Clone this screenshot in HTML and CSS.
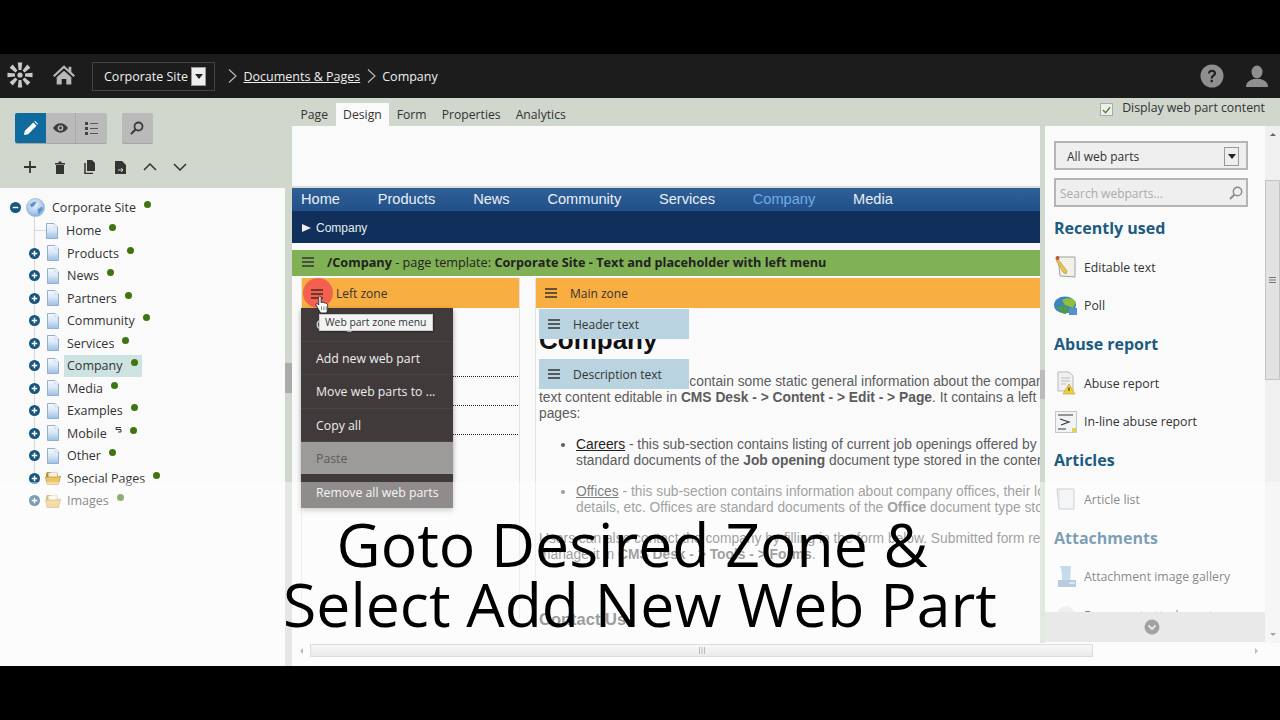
FILE: index.html
```html
<!DOCTYPE html>
<html lang="en">

<head>
    <meta charset="UTF-8">
    <title>Company - Documents &amp; Pages</title>
    <link rel="stylesheet" href="styles.css">
</head>

<body>
    <svg class="defs" width="0" height="0">
        <linearGradient id="docfill" x1="0" y1="0" x2="0" y2="1">
            <stop offset="0" stop-color="#f6f9fd"/>
            <stop offset=".45" stop-color="#dbe8f6"/>
            <stop offset="1" stop-color="#9cc0e6"/>
        </linearGradient>
        <radialGradient id="globefill" cx=".45" cy=".35" r=".75">
            <stop offset="0" stop-color="#eef5fc"/>
            <stop offset=".6" stop-color="#a9c9ec"/>
            <stop offset="1" stop-color="#6d9ed6"/>
        </radialGradient>
        <symbol id="doc" viewBox="0 0 12 16">
            <path d="M.5.5h7.500l3.500 3.500v11.500H.5z" fill="url(#docfill)" stroke="#8fb0cf"/>
            <path d="M8 .5V4h3.500" fill="#fff" stroke="#a9c3dc" stroke-width=".6"/>
        </symbol>
        <symbol id="plus" viewBox="0 0 12 12">
            <circle cx="6" cy="6" r="6" fill="#17577f"/>
            <path d="M3 6h6M6 3v6" stroke="#fff" stroke-width="1.600"/>
        </symbol>
        <symbol id="folder" viewBox="0 0 16 14">
            <path d="M1 3l1-2h4l1 2h6v3H1z" fill="#b08f3e"/>
            <path d="M3 2l9-1 1 7H4z" fill="#f6f1dc" stroke="#c2b27a" stroke-width=".5"/>
            <path d="M.5 6h12l3-1-2 8.500H2z" fill="#ecc565" stroke="#ab8a3a" stroke-width=".6"/>
        </symbol>
        <symbol id="bars" viewBox="0 0 12 10">
            <path d="M0 1h12M0 5h12M0 9h12" stroke="currentColor" stroke-width="1.700"/>
        </symbol>
        <symbol id="chev" viewBox="0 0 9 14">
            <path d="M1 .5L8 7l-7 6.500" fill="none" stroke="#bdbdbd" stroke-width="1.100"/>
        </symbol>
    </svg>

    <div class="screen">
        <header class="topbar">
            <svg class="logo" viewBox="0 0 26 26" width="26" height="26">
                <g fill="#c9c9c9">
                    <circle cx="13" cy="13" r="2.600"/>
                    <path d="M10.800.500h4.400l-.8 7.500h-2.800z"/>
                    <path d="M10.800.500h4.400l-.8 7.500h-2.800z" transform="rotate(45 13 13)"/>
                    <path d="M10.800.500h4.400l-.8 7.500h-2.800z" transform="rotate(90 13 13)"/>
                    <path d="M10.800.500h4.400l-.8 7.500h-2.800z" transform="rotate(135 13 13)"/>
                    <path d="M10.800.500h4.400l-.8 7.500h-2.800z" transform="rotate(180 13 13)"/>
                    <path d="M10.800.500h4.400l-.8 7.500h-2.800z" transform="rotate(225 13 13)"/>
                    <path d="M10.800.500h4.400l-.8 7.500h-2.800z" transform="rotate(270 13 13)"/>
                    <path d="M10.800.500h4.400l-.8 7.500h-2.800z" transform="rotate(315 13 13)"/>
                </g>
            </svg>
            <svg class="home" viewBox="0 0 24 22" width="22" height="21">
                <path d="M12 1L0 12l1.600 1.700L12 4.300l10.400 9.400L24 12l-4-3.600V2.500h-3v3.200z" fill="#b8b8b8"/>
                <path d="M4 14l8-7 8 7v8h-5.500v-6h-5v6H4z" fill="#b8b8b8"/>
            </svg>
            <div class="site-select">
                <span>Corporate Site</span>
                <span class="mini-arrow"></span>
            </div>
            <nav class="crumbs">
                <svg class="chev"><use href="#chev"/></svg>
                <a href="#">Documents &amp; Pages</a>
                <svg class="chev"><use href="#chev"/></svg>
                <span>Company</span>
            </nav>
            <div class="topbar-right">
                <svg viewBox="0 0 24 24" width="24" height="24">
                    <circle cx="12" cy="12" r="11.500" fill="#8f8f8f"/>
                    <path d="M8 9.500C8 7 9.800 5.800 12 5.800s4 1.300 4 3.400c0 3-3.300 2.800-3.300 5.300h-2c0-3.400 3.100-3.300 3.100-5.200 0-1-.7-1.600-1.800-1.600S10 8.400 10 9.500z" fill="#1c1c1c"/>
                    <rect x="10.600" y="15.800" width="2.200" height="2.400" fill="#1c1c1c"/>
                </svg>
                <svg viewBox="0 0 24 24" width="24" height="24">
                    <ellipse cx="12" cy="8" rx="5.500" ry="6.500" fill="#8f8f8f"/>
                    <path d="M1 23c0-5 4-7 7.500-8h7c3.500 1 7.500 3 7.500 8z" fill="#8f8f8f"/>
                </svg>
            </div>
        </header>

        <div class="workspace">
            <aside class="sidebar">
                <div class="side-tools">
                    <div class="modes">
                        <div class="mode-group">
                            <button class="mode active">
                                <svg viewBox="0 0 16 16" width="15" height="15"><path d="M1 15l1-4.500L11 1.500 14.500 5l-9 9zM12 .5l1-.5 3 3-.5 1z" fill="#fff"/></svg>
                            </button>
                            <button class="mode">
                                <svg viewBox="0 0 16 10" width="15" height="10"><path d="M0 5c2-3 5-5 8-5s6 2 8 5c-2 3-5 5-8 5S2 8 0 5z" fill="#3c3c3c"/><circle cx="8" cy="5" r="3" fill="#b9b9b9"/><circle cx="8" cy="5" r="1.500" fill="#3c3c3c"/></svg>
                            </button>
                            <button class="mode">
                                <svg viewBox="0 0 13 13" width="13" height="13"><path d="M0 0h3v3H0zM0 5h3v3H0zM0 10h3v3H0z" fill="#444"/><path d="M5 1.500h8M5 6.500h8M5 11.500h8" stroke="#555"/></svg>
                            </button>
                        </div>
                        <button class="mode single">
                            <svg viewBox="0 0 14 14" width="14" height="14"><circle cx="8.500" cy="5.500" r="4" fill="none" stroke="#3c3c3c" stroke-width="1.800"/><path d="M5.500 8.500L1 13" stroke="#3c3c3c" stroke-width="2.200"/></svg>
                        </button>
                    </div>
                    <div class="actions">
                        <span><svg viewBox="0 0 12 12" width="12" height="12"><path d="M6 0v12M0 6h12" stroke="#333" stroke-width="1.800"/></svg></span>
                        <span><svg viewBox="0 0 10 13" width="10" height="13"><path d="M0 2h10v1.500H0zM3.500.500h3V2h-3zM1 4h8v9H1z" fill="#333"/></svg></span>
                        <span><svg viewBox="0 0 12 14" width="12" height="14"><path d="M3 0h5l3 3v8H3z" fill="#333"/><path d="M1 3v10.500h8" fill="none" stroke="#333" stroke-width="1.500"/></svg></span>
                        <span><svg viewBox="0 0 11 13" width="11" height="13"><path d="M0 0h7l4 4v9H0z" fill="#333"/><path d="M3 9h5M6 7l2 2-2 2" fill="none" stroke="#d0d7cd"/></svg></span>
                        <span><svg viewBox="0 0 14 8" width="14" height="8"><path d="M1 7l6-6 6 6" fill="none" stroke="#333" stroke-width="1.500"/></svg></span>
                        <span><svg viewBox="0 0 14 8" width="14" height="8"><path d="M1 1l6 6 6-6" fill="none" stroke="#333" stroke-width="1.500"/></svg></span>
                    </div>
                </div>
                <div class="side-main">
                    <div class="tree">
                        <div class="tree-root">
                            <svg class="expander" viewBox="0 0 12 12"><circle cx="6" cy="6" r="6" fill="#17577f"/><path d="M3 6h6" stroke="#fff" stroke-width="1.600"/></svg>
                            <svg class="globe" viewBox="0 0 20 20" width="19" height="19"><circle cx="10" cy="10" r="9.500" fill="url(#globefill)" stroke="#a9bccf"/><path d="M4 7c3-3 5-3 7-3l-2 4-3 2zM12 12l5-3 .5 3-4 5z" fill="#5f93cf"/></svg>
                            <span>Corporate Site</span><i class="dot"></i>
                        </div>
                        <div class="tree-row leaf"><svg class="page"><use href="#doc"/></svg><span>Home</span><i class="dot"></i></div>
                        <div class="tree-row"><svg class="expander"><use href="#plus"/></svg><svg class="page"><use href="#doc"/></svg><span>Products</span><i class="dot"></i></div>
                        <div class="tree-row"><svg class="expander"><use href="#plus"/></svg><svg class="page"><use href="#doc"/></svg><span>News</span><i class="dot"></i></div>
                        <div class="tree-row"><svg class="expander"><use href="#plus"/></svg><svg class="page"><use href="#doc"/></svg><span>Partners</span><i class="dot"></i></div>
                        <div class="tree-row"><svg class="expander"><use href="#plus"/></svg><svg class="page"><use href="#doc"/></svg><span>Community</span><i class="dot"></i></div>
                        <div class="tree-row"><svg class="expander"><use href="#plus"/></svg><svg class="page"><use href="#doc"/></svg><span>Services</span><i class="dot"></i></div>
                        <div class="tree-row"><svg class="expander"><use href="#plus"/></svg><svg class="page"><use href="#doc"/></svg><div class="selected"><span>Company</span><i class="dot"></i></div></div>
                        <div class="tree-row"><svg class="expander"><use href="#plus"/></svg><svg class="page"><use href="#doc"/></svg><span>Media</span><i class="dot"></i></div>
                        <div class="tree-row"><svg class="expander"><use href="#plus"/></svg><svg class="page"><use href="#doc"/></svg><span>Examples</span><i class="dot"></i></div>
                        <div class="tree-row"><svg class="expander"><use href="#plus"/></svg><svg class="page"><use href="#doc"/></svg><span>Mobile</span><svg class="link-mark" viewBox="0 0 7 6" width="7" height="6"><path d="M6 .5H1v2h5v2.500H3" fill="none" stroke="#333"/></svg><i class="dot"></i></div>
                        <div class="tree-row"><svg class="expander"><use href="#plus"/></svg><svg class="page"><use href="#doc"/></svg><span>Other</span><i class="dot"></i></div>
                        <div class="tree-row"><svg class="expander"><use href="#plus"/></svg><svg class="page wide"><use href="#folder"/></svg><span>Special Pages</span><i class="dot"></i></div>
                        <div class="tree-row"><svg class="expander"><use href="#plus"/></svg><svg class="page wide"><use href="#folder"/></svg><span>Images</span><i class="dot"></i></div>
                    </div>
                    <div class="side-splitter"><span class="handle"></span></div>
                </div>
            </aside>

            <div class="content">
                <div class="tabs-row">
                    <div class="tabs">
                        <span class="tab">Page</span>
                        <span class="tab current">Design</span>
                        <span class="tab">Form</span>
                        <span class="tab">Properties</span>
                        <span class="tab">Analytics</span>
                    </div>
                    <label class="display-check">
                        <span class="checkbox">
                            <svg viewBox="0 0 10 8" width="9" height="8"><path d="M1 4l3 3 5-6" fill="none" stroke="#4c8a2a" stroke-width="1.500"/></svg>
                        </span>
                        Display web part content
                    </label>
                </div>

                <div class="content-body">
                    <div class="page-frame">
                        <div class="page-top"></div>
                        <nav class="site-nav">
                            <a href="#">Home</a>
                            <a href="#">Products</a>
                            <a href="#">News</a>
                            <a href="#">Community</a>
                            <a href="#">Services</a>
                            <a href="#" class="on">Company</a>
                            <a href="#">Media</a>
                        </nav>
                        <div class="site-subnav"><span class="tri"></span>Company</div>
                        <div class="template-bar">
                            <svg class="bars"><use href="#bars"/></svg>
                            <b>/Company</b>&nbsp;- page template:&nbsp;<b>Corporate Site - Text and placeholder with left menu</b>
                        </div>
                        <div class="zones">
                            <section class="left-zone">
                                <div class="zone-head">
                                    <span>Left zone</span>
                                </div>
                                <div class="zone-lines">
                                    <hr>
                                    <hr>
                                    <hr>
                                </div>
                            </section>
                            <section class="main-zone">
                                <div class="zone-head">
                                    <svg class="bars"><use href="#bars"/></svg>
                                    <span>Main zone</span>
                                </div>
                                <article class="copy">
                                    <h1>Company</h1>
                                    <p>This page and its pages contain some static general information about the company<br>
                                    text content editable in <b>CMS Desk - &gt; Content - &gt; Edit - &gt; Page</b>. It contains a left menu<br>
                                    pages:</p>
                                    <ul>
                                        <li><a href="#">Careers</a> - this sub-section contains listing of current job openings offered by the<br>
                                        standard documents of the <b>Job opening</b> document type stored in the content tree</li>
                                        <li><a href="#">Offices</a> - this sub-section contains information about company offices, their location<br>
                                        details, etc. Offices are standard documents of the <b>Office</b> document type stored</li>
                                    </ul>
                                    <p>Users can also contact the company by filling in the form below. Submitted form records<br>
                                    manage it in <b>CMS Desk - &gt; Tools - &gt; Forms</b>.</p>
                                    <h2>Contact Us</h2>
                                </article>
                                <div class="webpart wp-header"><svg class="bars"><use href="#bars"/></svg>Header text</div>
                                <div class="webpart wp-desc"><svg class="bars"><use href="#bars"/></svg>Description text</div>
                            </section>

                            <div class="zone-menu">
                                <div class="menu-item">Configure</div>
                                <div class="menu-item">Add new web part</div>
                                <div class="menu-item">Move web parts to ...</div>
                                <div class="menu-item">Copy all</div>
                                <div class="menu-item disabled">Paste</div>
                                <div class="menu-item last">Remove all web parts</div>
                            </div>
                            <span class="click-ring"></span>
                            <svg class="ring-bars"><use href="#bars"/></svg>
                            <svg class="hand" viewBox="0 0 16 20" width="15" height="19">
                                <path d="M5 1c1 0 1.500.7 1.500 1.500V8l1-.5 1.500.3 1 .5 1.500.2 1 .7 1 .8v5l-1 4H6L1 10.500c-.4-1 .8-2 2-1l1 1V2.500C4 1.700 4.300 1 5 1z" fill="#fff" stroke="#222" stroke-width=".9"/>
                                <path d="M7 12v4M9.500 12v4M12 12v4" stroke="#222" stroke-width=".6"/>
                            </svg>
                            <div class="tip">Web part zone menu</div>
                        </div>
                    </div>
                    <div class="frame-splitter"><span class="handle"></span></div>

                    <aside class="parts">
                        <div class="parts-select">All web parts<span class="mini-arrow"></span></div>
                        <div class="parts-search">
                            <span>Search webparts...</span>
                            <svg viewBox="0 0 14 14" width="14" height="14"><circle cx="8.500" cy="5.500" r="4.200" fill="none" stroke="#888" stroke-width="1.400"/><path d="M5.500 8.500L1 13" stroke="#888" stroke-width="1.800"/></svg>
                        </div>
                        <h3>Recently used</h3>
                        <div class="part">
                            <svg viewBox="0 0 22 24" width="22" height="24"><path d="M3 2h17v20L5 21z" fill="#f3f1e6" stroke="#9aa3a8"/><path d="M2 3l10 13-1 3-3-2L1 5z" fill="#e8c64e" stroke="#a8872a" stroke-width=".6"/><circle cx="2.500" cy="3" r="2" fill="#c7523f"/></svg>
                            <span>Editable text</span>
                        </div>
                        <div class="part">
                            <svg viewBox="0 0 24 20" width="24" height="20"><ellipse cx="11" cy="9" rx="11" ry="8.500" fill="#3c83bf"/><path d="M8 4c5-3 11-2 14 2l-3 6-8-3z" fill="#8fbf3c"/><path d="M2 12l9-3 5 7-6 2z" fill="#4e9a4e"/><rect x="15" y="12" width="8" height="7" fill="#5a8fc9"/></svg>
                            <span>Poll</span>
                        </div>
                        <h3>Abuse report</h3>
                        <div class="part">
                            <svg viewBox="0 0 20 24" width="20" height="24"><path d="M2 1h11l4 4v15H2z" fill="#f0f0f0" stroke="#b9b9b9"/><path d="M5 7h9M5 10h9M5 13h5" stroke="#bdbdbd"/><path d="M13 13l6 10H7z" fill="#f2d23c" stroke="#b39a22" stroke-width=".6"/><path d="M13 16.500v3.500" stroke="#222"/></svg>
                            <span>Abuse report</span>
                        </div>
                        <div class="part">
                            <svg viewBox="0 0 22 22" width="22" height="22"><rect x=".5" y=".5" width="21" height="21" fill="#f1f3f4" stroke="#c3c8cb"/><path d="M3 4h15M5 8l9 3-8 3M3 18h8" fill="none" stroke="#3a3a3a" stroke-width="1.200"/><rect x="17" y="17" width="4" height="4" fill="#dfd24c"/></svg>
                            <span>In-line abuse report</span>
                        </div>
                        <h3>Articles</h3>
                        <div class="part">
                            <svg viewBox="0 0 20 24" width="20" height="24"><path d="M1 2h17v20H3z" fill="#eceef0" stroke="#a8adb2"/><path d="M3 2v20" stroke="#c6cacd"/></svg>
                            <span>Article list</span>
                        </div>
                        <h3>Attachments</h3>
                        <div class="part">
                            <svg viewBox="0 0 22 24" width="22" height="24"><path d="M5 1h11l-1 16H8C6 12 8 8 5 1z" fill="#9cc0dc"/><path d="M3 15h18v7H3z" fill="#85a8c4"/><path d="M14 18h6" stroke="#fff"/></svg>
                            <span>Attachment image gallery</span>
                        </div>
                        <div class="part">
                            <svg viewBox="0 0 22 24" width="22" height="24"><circle cx="11" cy="12" r="9" fill="#e3e3e3"/></svg>
                            <span>Document attachments</span>
                        </div>
                        <div class="parts-more">
                            <svg viewBox="0 0 16 16" width="16" height="16"><circle cx="8" cy="8" r="7.500" fill="#5f5f5f"/><path d="M4.500 6.500L8 10l3.500-3.500" fill="none" stroke="#d8d8d8" stroke-width="1.800"/></svg>
                        </div>
                    </aside>

                    <div class="v-scroll">
                        <span class="up"></span>
                        <div class="v-track">
                            <div class="v-thumb">
                                <svg viewBox="0 0 7 6" width="7" height="6"><path d="M0 .5h7M0 3h7M0 5.500h7" stroke="#777"/></svg>
                            </div>
                        </div>
                        <span class="down"></span>
                    </div>
                </div>

                <div class="h-scroll">
                    <span class="left"></span>
                    <div class="h-thumb">
                        <svg viewBox="0 0 6 7" width="6" height="7"><path d="M.5 0v7M3 0v7M5.500 0v7" stroke="#888"/></svg>
                    </div>
                    <span class="right"></span>
                </div>
            </div>
        </div>

        <div class="lower-fade"></div>
        <div class="caption">Goto Desired Zone &amp;&nbsp;<br>Select Add New Web Part</div>
    </div>
</body>

</html>
```

FILE: styles.css
```css
* {
    box-sizing: border-box;
}

body {
    margin: 0;
    background: #000;
    font-family: "Open Sans", "Liberation Sans", sans-serif;
    font-size: 12.5px;
    color: #333;
}

.defs {
    display: block;
    height: 0;
}

.screen {
    position: relative;
    width: 1280px;
    height: 720px;
    padding: 54px 0;
    overflow: hidden;
}

/* top bar */
.topbar {
    height: 44px;
    background: #1c1c1c;
    display: flex;
    align-items: center;
    padding-left: 7px;
    color: #eee;
}

.logo {
    margin-bottom: 2px;
}

.home {
    margin: 0 0 3px 20px;
}

.site-select {
    margin-left: 17px;
    width: 123px;
    height: 29px;
    border: 1px solid #444;
    display: flex;
    align-items: center;
    justify-content: space-between;
    padding: 0 8px 0 11px;
}

.mini-arrow {
    width: 15px;
    height: 19px;
    background: #eee;
    border: 1px solid #999;
    display: flex;
    align-items: center;
    justify-content: center;
}

.mini-arrow::after {
    content: "";
    border: 4px solid transparent;
    border-top: 5px solid #222;
    border-bottom: 0;
}

.crumbs {
    display: flex;
    align-items: center;
    margin-left: 13px;
    gap: 6.5px;
    font-size: 12.5px;
}

.crumbs a {
    color: #eee;
}

.chev {
    width: 9px;
    height: 14px;
    flex: none;
}

.topbar-right {
    margin-left: auto;
    display: flex;
    gap: 21px;
    padding-right: 11px;
}

.workspace {
    display: flex;
    height: 568px;
}

/* left side */
.sidebar {
    width: 292px;
    display: flex;
    flex-direction: column;
}

.side-tools {
    height: 90px;
    background: #d0d7cd;
    padding: 15px 0 0 15px;
}

.modes {
    display: flex;
    gap: 15px;
}

.mode-group {
    display: flex;
    border-radius: 2px;
    box-shadow: 0 1px 0 #a5a5a5;
}

.mode {
    width: 30.67px;
    height: 30px;
    padding: 0;
    border: 0;
    border-right: 1px solid #a9a9a9;
    background: #bababa;
    display: flex;
    align-items: center;
    justify-content: center;
}

.mode.active {
    background: #0f6a9e;
    border: 0;
    border-radius: 2px 0 0 2px;
}

.mode-group .mode:last-child {
    border: 0;
    border-radius: 0 2px 2px 0;
}

.mode.single {
    border: 0;
    border-radius: 2px;
    box-shadow: 0 1px 0 #a5a5a5;
}

.actions {
    display: flex;
    align-items: center;
    margin-top: 17px;
    height: 14px;
}

.actions span {
    width: 30px;
    display: flex;
    justify-content: center;
}

.side-main {
    flex: 1;
    display: flex;
}

.tree {
    flex: 1;
    background: #fafafa;
    padding-top: 8px;
    font-size: 12.5px;
    background-image: linear-gradient(#d8d8d8, #d8d8d8);
    background-size: 1px 270px;
    background-position: 34px 26px;
    background-repeat: no-repeat;
}

.tree-root,
.tree-row {
    height: 22.5px;
    display: flex;
    align-items: center;
}

.tree-root {
    padding-left: 10px;
    margin-bottom: 1px;
}

.tree-root .globe {
    margin: 0 7px 0 5px;
}

.tree-row {
    padding-left: 29px;
}

.tree-row.leaf {
    padding-left: 34px;
}

.tree-row.leaf::before {
    content: "";
    width: 12px;
    height: 1px;
    margin-right: -12px;
    background: #d8d8d8;
}

.tree-row.leaf .page {
    margin-left: 12px;
}

.expander {
    width: 11px;
    height: 11px;
    flex: none;
}

.page {
    width: 12px;
    height: 16px;
    margin: 0 8px 0 7px;
    flex: none;
}

.page.wide {
    width: 16px;
    height: 14px;
    margin: 0 6px 0 5px;
}

.dot {
    width: 7px;
    height: 7px;
    border-radius: 50%;
    background: #3f7410;
    margin: 0 0 6px 8px;
}

.link-mark {
    margin: 0 0 6px 8px;
}

.selected {
    display: flex;
    align-items: center;
    margin-left: -3px;
    padding: 0 3px;
    width: 78px;
    height: 22.5px;
    background: #cde3e2;
}

.side-splitter {
    width: 7px;
    background: #d0d7cd;
}

.side-splitter .handle {
    display: block;
    width: 7px;
    height: 30px;
    margin-top: 175px;
    background: #aaa;
}

/* center */
.content {
    flex: 1;
    display: flex;
    flex-direction: column;
    min-width: 0;
}

.tabs-row {
    height: 28px;
    background: #d0d7cd;
    display: flex;
    justify-content: space-between;
}

.tabs {
    display: flex;
    height: 28px;
    padding-left: 1px;
}

.tab {
    padding: 0 7.5px;
    line-height: 33px;
    height: 28px;
    font-size: 12.2px;
}

.tab.current {
    background: #fafafa;
    margin-top: 5px;
    line-height: 23px;
    height: 23px;
}

.display-check {
    display: flex;
    align-items: flex-start;
    gap: 9px;
    padding: 1px 15px 0 0;
    font-size: 12.3px;
}

.checkbox {
    width: 13px;
    height: 13px;
    margin-top: 4px;
    background: #eee;
    border: 1px solid #aaa;
    display: flex;
    align-items: center;
    justify-content: center;
}

.content-body {
    display: flex;
    height: 517px;
}

.page-frame {
    width: 748px;
    background: #fafafa;
    overflow: hidden;
    font-family: "Liberation Sans", sans-serif;
}

.page-top {
    height: 62px;
    border-bottom: 2px solid #dcdcdc;
}

.site-nav {
    height: 23px;
    padding: 0 0 2px 9px;
    background: linear-gradient(#2f6096, #22508a);
    display: flex;
    align-items: center;
    gap: 37.8px;
    font-size: 14.6px;
}

.site-nav a {
    color: #eaf0f6;
    text-decoration: none;
}

.site-nav a.on {
    color: #6eaee6;
}

.site-subnav {
    height: 32px;
    padding: 1px 0 0 10px;
    background: #102f5a;
    color: #e6ecf3;
    display: flex;
    align-items: center;
    font-size: 12px;
}

.tri {
    border: 4.5px solid transparent;
    border-left: 9px solid #eee;
    border-right: 0;
    margin-right: 5px;
}

.template-bar {
    height: 26px;
    margin-top: 7px;
    padding: 0 0 2px 10px;
    background: #80b155;
    display: flex;
    align-items: center;
    font-family: "Open Sans", sans-serif;
    font-size: 12.7px;
    color: #222;
    white-space: nowrap;
}

.bars {
    width: 12px;
    height: 10px;
    color: #333;
    flex: none;
}

.template-bar .bars {
    margin-right: 13px;
}

.zones {
    position: relative;
    display: flex;
    height: 100%;
    margin-top: 2px;
    padding-left: 9px;
}

.left-zone {
    width: 219px;
    border-right: 1px solid #e2e2e2;
    border-left: 1px solid #e2e2e2;
    flex: none;
    height: 340px;
}

.main-zone {
    position: relative;
    margin-left: 15px;
    border-left: 1px solid #e2e2e2;
    flex: 1;
    min-width: 0;
    height: 340px;
}

.zone-head {
    height: 30px;
    background: #f9ae42;
    display: flex;
    align-items: center;
    font-family: "Open Sans", sans-serif;
    font-size: 12px;
    color: #333;
}

.left-zone .zone-head {
    padding-left: 34px;
}

.main-zone .zone-head {
    padding-left: 9px;
}

.main-zone .zone-head .bars {
    margin-right: 13px;
}

.zone-lines {
    padding: 68px 1px 0 151px;
}

.zone-lines hr {
    margin: 0 0 28px;
    height: 1px;
    border: 0;
    border-top: 1px dotted #222;
}

.copy {
    padding: 17px 0 0 3px;
    color: #5c5c5c;
    font-size: 13.8px;
    line-height: 16px;
    white-space: nowrap;
}

.copy h1 {
    margin: 0 0 19px;
    font-size: 26px;
    line-height: 30px;
    color: #111;
}

.copy p {
    margin: 0;
}

.copy ul {
    margin: 15px 0;
    padding-left: 37px;
}

.copy li {
    margin-bottom: 15px;
}

.copy a {
    color: #222;
}

.copy h2 {
    margin: 46px 0 0;
    font-size: 16.5px;
    line-height: 20px;
    color: #555;
}

.webpart {
    position: absolute;
    left: 3px;
    width: 150px;
    height: 30px;
    background: #b9d3e0;
    display: flex;
    align-items: center;
    padding-left: 9px;
    font-family: "Open Sans", sans-serif;
    font-size: 12px;
    color: #333;
}

.webpart .bars {
    margin-right: 13px;
}

.wp-header {
    top: 31px;
}

.wp-desc {
    top: 81px;
}

/* zone context menu */
.zone-menu {
    position: absolute;
    left: 9px;
    top: 30px;
    width: 152px;
    height: 200px;
    background: #403a3a;
    color: #eee;
    font-family: "Open Sans", sans-serif;
    font-size: 12.3px;
    box-shadow: 0 2px 5px rgba(0, 0, 0, .35);
}

.menu-item {
    height: 33.3px;
    line-height: 34px;
    padding-left: 15px;
    border-bottom: 1px solid #4a4444;
}

.menu-item:first-child {
    height: 34px;
}

.menu-item.disabled {
    background: #9d9a9a;
    color: #5d5a5a;
    height: 32.5px;
    line-height: 34px;
    margin-bottom: 8px;
    border: 0;
}

.menu-item.last {
    height: 26px;
    line-height: 21px;
    border: 0;
}

.click-ring {
    position: absolute;
    left: 11px;
    top: 0;
    width: 30px;
    height: 30px;
    border-radius: 50%;
    background: #f4604f;
}

.ring-bars {
    position: absolute;
    left: 19px;
    top: 11px;
    width: 12px;
    height: 10px;
    color: #4a2a20;
}

.hand {
    position: absolute;
    left: 23px;
    top: 17px;
}

.tip {
    position: absolute;
    left: 27px;
    top: 36px;
    height: 17px;
    line-height: 15px;
    padding: 0 5px;
    background: #f3f3f3;
    border: 1px solid #ccc;
    box-shadow: 1px 1px 2px rgba(0, 0, 0, .3);
    font-family: "Open Sans", sans-serif;
    font-size: 10.4px;
    color: #333;
    white-space: nowrap;
}

/* web part list */
.frame-splitter {
    width: 5px;
    background: #d0d7cd;
}

.frame-splitter .handle {
    display: block;
    width: 5px;
    height: 29px;
    margin-top: 244px;
    background: #bbb;
}

.parts {
    position: relative;
    width: 220px;
    background: #fafafa;
    padding: 15px 16px 0 9px;
    overflow: hidden;
}

.parts-select,
.parts-search {
    width: 194px;
    border: 2px solid #b5b5b5;
    background: #efefef;
    display: flex;
    align-items: center;
    justify-content: space-between;
}

.parts-select {
    height: 29px;
    padding: 1px 7px 0 11px;
    font-size: 12px;
}

.parts-search {
    height: 29px;
    margin-top: 8px;
    padding: 1px 3px 0 4px;
    color: #aaa;
    font-size: 12px;
}

.parts h3 {
    margin: 7px 0 0;
    height: 24px;
    line-height: 24px;
    font-size: 16px;
    font-weight: 700;
    color: #1d5b82;
}

.parts .parts-search + h3 {
    margin-top: 9px;
}

.part {
    height: 38.5px;
    display: flex;
    align-items: center;
    font-size: 12.3px;
    white-space: nowrap;
}

.part svg {
    width: 24px;
    flex: none;
    margin-right: 6px;
}

.parts h3 + .part {
    margin-top: 8px;
}

.parts-more {
    position: absolute;
    left: 0;
    right: 0;
    bottom: 1px;
    height: 30px;
    padding-right: 7px;
    background: #d9d9d9;
    display: flex;
    align-items: center;
    justify-content: center;
}

.v-scroll {
    width: 15px;
    background: #f0f0f0;
    display: flex;
    flex-direction: column;
}

.up,
.down {
    height: 17px;
    flex: none;
    display: flex;
    align-items: center;
    justify-content: center;
}

.up::after {
    content: "";
    border: 3px solid transparent;
    border-bottom: 3px solid #666;
    border-top: 0;
}

.down::after {
    content: "";
    border: 3px solid transparent;
    border-top: 3px solid #666;
    border-bottom: 0;
}

.v-track {
    flex: 1;
    padding-top: 37px;
}

.v-thumb {
    height: 200px;
    background: #e2e2e2;
    border: 1px solid #c4c4c4;
    display: flex;
    align-items: center;
    justify-content: center;
}

.h-scroll {
    height: 23px;
    background: #fafafa;
    display: flex;
    align-items: flex-start;
    padding-top: 1px;
    padding-right: 15px;
}

.h-scroll .left,
.h-scroll .right {
    width: 18px;
    height: 13px;
    display: flex;
    align-items: center;
    justify-content: center;
}

.h-scroll .left::after {
    content: "";
    border: 3px solid transparent;
    border-right: 3px solid #888;
    border-left: 0;
}

.h-scroll .right {
    margin-left: auto;
}

.h-scroll .right::after {
    content: "";
    border: 3px solid transparent;
    border-left: 3px solid #888;
    border-right: 0;
}

.h-thumb {
    width: 783px;
    height: 13px;
    background: linear-gradient(#f2f2f2, #dcdcdc);
    border: 1px solid #c4c4c4;
    display: flex;
    align-items: center;
    justify-content: center;
}

/* video lower third */
.lower-fade {
    position: absolute;
    left: 0;
    right: 0;
    top: 482px;
    height: 184px;
    background: rgba(255, 255, 255, .42);
}

.caption {
    position: absolute;
    left: 0;
    width: 1280px;
    top: 514px;
    text-align: center;
    font-family: "Open Sans", sans-serif;
    font-size: 60.7px;
    line-height: 60px;
    color: #000;
}
```
